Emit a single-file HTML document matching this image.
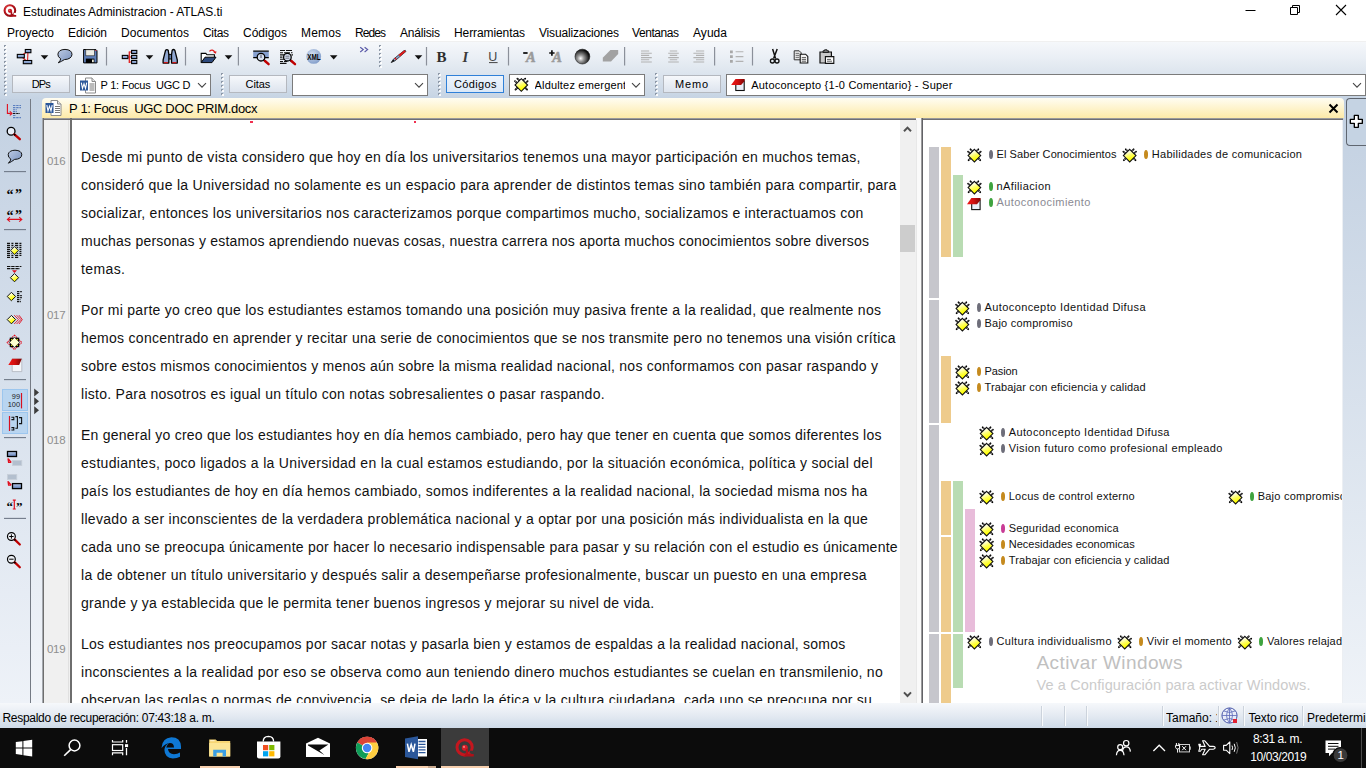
<!DOCTYPE html>
<html><head><meta charset="utf-8"><title>ATLAS.ti</title>
<style>
html,body{margin:0;padding:0;width:1366px;height:768px;overflow:hidden;background:#fff;font-family:'Liberation Sans', sans-serif;}
#root{position:relative;width:1366px;height:768px;overflow:hidden;}
#root div,#root svg{position:absolute;}
.t{position:absolute;white-space:pre;font-family:'Liberation Sans', sans-serif;}

</style></head><body><div id="root">
<div style="left:0px;top:0px;width:1366px;height:42px;background:#fff;"></div>
<div style="left:0px;top:41px;width:1366px;height:58px;background:linear-gradient(#f6f8fb 0%,#eaeff5 28%,#dde5ee 55%,#c5d3e3 100%);"></div>
<div style="left:0px;top:41px;width:1366px;height:1px;background:#f0f0f0;"></div>
<div style="left:0px;top:99px;width:30px;height:605px;background:linear-gradient(#c3d1e2,#eef2f8);"></div>
<div style="left:30px;top:99px;width:1px;height:605px;background:#747a84;"></div>
<div style="left:31px;top:99px;width:12px;height:605px;background:linear-gradient(#c6d4e4,#f1f4f9);"></div>
<div style="left:1343px;top:99px;width:23px;height:605px;background:linear-gradient(#c2d0e1,#eff3f8);"></div>
<div style="left:42px;top:98px;width:1302px;height:20px;background:linear-gradient(#fffdf2,#fdeaa8);border-radius:4px 4px 0 0;"></div>
<div style="left:43px;top:118px;width:1300px;height:1px;background:#9a9a9a;"></div>
<div style="left:43px;top:119px;width:1300px;height:1px;background:#6e6e74;"></div>
<div style="left:44px;top:120px;width:26px;height:584px;background:#f0f0f0;"></div>
<div style="left:68px;top:120px;width:1px;height:584px;background:#e0e0e0;"></div>
<div style="left:42px;top:118px;width:1px;height:586px;background:#a4a8ae;"></div>
<div style="left:43px;top:118px;width:1px;height:586px;background:#6e6e6e;"></div>
<div style="left:70px;top:118px;width:2px;height:586px;background:#6e6e6e;"></div>
<div style="left:72px;top:120px;width:828px;height:584px;background:#fff;"></div>
<div style="left:900px;top:120px;width:16px;height:584px;background:#f0f0f0;"></div>
<div style="left:900px;top:225px;width:15px;height:27px;background:#cdcdcd;"></div>
<div style="left:916px;top:118px;width:6px;height:586px;background:#fafafa;"></div>
<div style="left:916px;top:120px;width:1px;height:584px;background:#e8e8e8;"></div>
<div style="left:921px;top:118px;width:1px;height:586px;background:#9a9a9c;"></div>
<div style="left:922px;top:118px;width:1px;height:586px;background:#626266;"></div>
<div style="left:923px;top:120px;width:419px;height:584px;background:#fff;"></div>
<div style="left:1342px;top:120px;width:1px;height:584px;background:#eceff3;"></div>
<span class="t" style="left:23px;top:5.84px;font-size:12px;line-height:12px;color:#000;letter-spacing:-0.029px;">Estudinates Administracion - ATLAS.ti</span>
<span class="t" style="left:7px;top:26.84px;font-size:12px;line-height:12px;color:#000;letter-spacing:-0.051px;">Proyecto</span>
<span class="t" style="left:68px;top:26.84px;font-size:12px;line-height:12px;color:#000;letter-spacing:-0.060px;">Edición</span>
<span class="t" style="left:121px;top:26.84px;font-size:12px;line-height:12px;color:#000;letter-spacing:0.069px;">Documentos</span>
<span class="t" style="left:203px;top:26.84px;font-size:12px;line-height:12px;color:#000;letter-spacing:-0.336px;">Citas</span>
<span class="t" style="left:243px;top:26.84px;font-size:12px;line-height:12px;color:#000;letter-spacing:-0.005px;">Códigos</span>
<span class="t" style="left:301px;top:26.84px;font-size:12px;line-height:12px;color:#000;letter-spacing:0.164px;">Memos</span>
<span class="t" style="left:355px;top:26.84px;font-size:12px;line-height:12px;color:#000;letter-spacing:-0.922px;">Redes</span>
<span class="t" style="left:400px;top:26.84px;font-size:12px;line-height:12px;color:#000;letter-spacing:-0.194px;">Análisis</span>
<span class="t" style="left:454px;top:26.84px;font-size:12px;line-height:12px;color:#000;letter-spacing:-0.094px;">Herramientas</span>
<span class="t" style="left:539px;top:26.84px;font-size:12px;line-height:12px;color:#000;letter-spacing:-0.179px;">Visualizaciones</span>
<span class="t" style="left:632px;top:26.84px;font-size:12px;line-height:12px;color:#000;letter-spacing:-0.435px;">Ventanas</span>
<span class="t" style="left:693px;top:26.84px;font-size:12px;line-height:12px;color:#000;letter-spacing:0.047px;">Ayuda</span>
<span class="t" style="left:81px;top:149.75px;font-size:14px;line-height:14px;color:#111;letter-spacing:0.275px;">Desde mi punto de vista considero que hoy en día los universitarios tenemos una mayor participación en muchos temas,</span>
<span class="t" style="left:81px;top:177.75px;font-size:14px;line-height:14px;color:#111;letter-spacing:0.294px;">consideró que la Universidad no solamente es un espacio para aprender de distintos temas sino también para compartir, para</span>
<span class="t" style="left:81px;top:205.75px;font-size:14px;line-height:14px;color:#111;letter-spacing:0.271px;">socializar, entonces los universitarios nos caracterizamos porque compartimos mucho, socializamos e interactuamos con</span>
<span class="t" style="left:81px;top:233.75px;font-size:14px;line-height:14px;color:#111;letter-spacing:0.218px;">muchas personas y estamos aprendiendo nuevas cosas, nuestra carrera nos aporta muchos conocimientos sobre diversos</span>
<span class="t" style="left:81px;top:261.75px;font-size:14px;line-height:14px;color:#111;letter-spacing:0.397px;">temas.</span>
<span class="t" style="left:81px;top:302.75px;font-size:14px;line-height:14px;color:#111;letter-spacing:0.281px;">Por mi parte yo creo que los estudiantes estamos tomando una posición muy pasiva frente a la realidad, que realmente nos</span>
<span class="t" style="left:81px;top:330.75px;font-size:14px;line-height:14px;color:#111;letter-spacing:0.275px;">hemos concentrado en aprender y recitar una serie de conocimientos que se nos transmite pero no tenemos una visión crítica</span>
<span class="t" style="left:81px;top:358.75px;font-size:14px;line-height:14px;color:#111;letter-spacing:0.254px;">sobre estos mismos conocimientos y menos aún sobre la misma realidad nacional, nos conformamos con pasar raspando y</span>
<span class="t" style="left:81px;top:386.75px;font-size:14px;line-height:14px;color:#111;letter-spacing:0.277px;">listo. Para nosotros es igual un título con notas sobresalientes o pasar raspando.</span>
<span class="t" style="left:81px;top:427.75px;font-size:14px;line-height:14px;color:#111;letter-spacing:0.241px;">En general yo creo que los estudiantes hoy en día hemos cambiado, pero hay que tener en cuenta que somos diferentes los</span>
<span class="t" style="left:81px;top:455.75px;font-size:14px;line-height:14px;color:#111;letter-spacing:0.307px;">estudiantes, poco ligados a la Universidad en la cual estamos estudiando, por la situación económica, política y social del</span>
<span class="t" style="left:81px;top:483.75px;font-size:14px;line-height:14px;color:#111;letter-spacing:0.276px;">país los estudiantes de hoy en día hemos cambiado, somos indiferentes a la realidad nacional, la sociedad misma nos ha</span>
<span class="t" style="left:81px;top:511.75px;font-size:14px;line-height:14px;color:#111;letter-spacing:0.305px;">llevado a ser inconscientes de la verdadera problemática nacional y a optar por una posición más individualista en la que</span>
<span class="t" style="left:81px;top:539.75px;font-size:14px;line-height:14px;color:#111;letter-spacing:0.259px;">cada uno se preocupa únicamente por hacer lo necesario indispensable para pasar y su relación con el estudio es únicamente</span>
<span class="t" style="left:81px;top:567.75px;font-size:14px;line-height:14px;color:#111;letter-spacing:0.288px;">la de obtener un título universitario y después salir a desempeñarse profesionalmente, buscar un puesto en una empresa</span>
<span class="t" style="left:81px;top:595.75px;font-size:14px;line-height:14px;color:#111;letter-spacing:0.274px;">grande y ya establecida que le permita tener buenos ingresos y mejorar su nivel de vida.</span>
<span class="t" style="left:81px;top:636.75px;font-size:14px;line-height:14px;color:#111;letter-spacing:0.241px;">Los estudiantes nos preocupamos por sacar notas y pasarla bien y estamos de espaldas a la realidad nacional, somos</span>
<span class="t" style="left:81px;top:664.75px;font-size:14px;line-height:14px;color:#111;letter-spacing:0.282px;">inconscientes a la realidad por eso se observa como aun teniendo dinero muchos estudiantes se cuelan en transmilenio, no</span>
<span class="t" style="left:81px;top:692.75px;font-size:14px;line-height:14px;color:#111;letter-spacing:0.254px;">observan las reglas o normas de convivencia, se deja de lado la ética y la cultura ciudadana, cada uno se preocupa por su</span>
<div style="left:923px;top:119px;width:419px;height:584px;overflow:hidden">
<div style="left:6px;top:28px;width:10px;height:151px;background:#c6c6cc;"></div>
<div style="left:6px;top:181px;width:10px;height:123px;background:#c6c6cc;"></div>
<div style="left:6px;top:306px;width:10px;height:207px;background:#c6c6cc;"></div>
<div style="left:6px;top:515px;width:10px;height:70px;background:#c6c6cc;"></div>
<div style="left:18px;top:28px;width:10px;height:110px;background:#eecb8c;"></div>
<div style="left:18px;top:237px;width:10px;height:67px;background:#eecb8c;"></div>
<div style="left:18px;top:362px;width:10px;height:54px;background:#eecb8c;"></div>
<div style="left:18px;top:418px;width:10px;height:95px;background:#eecb8c;"></div>
<div style="left:18px;top:515px;width:10px;height:70px;background:#eecb8c;"></div>
<div style="left:30px;top:56px;width:10px;height:82px;background:#b9dcb3;"></div>
<div style="left:30px;top:362px;width:10px;height:151px;background:#b9dcb3;"></div>
<div style="left:30px;top:515px;width:10px;height:54px;background:#b9dcb3;"></div>
<div style="left:42px;top:390px;width:10px;height:123px;background:#e8bcda;"></div>
<svg width="0" height="0" style="left:0;top:0"><defs><linearGradient id="dg" x1="0.3" y1="0" x2="0.7" y2="1"><stop offset="0.15" stop-color="#ffffff"/><stop offset="0.5" stop-color="#ffff60"/><stop offset="0.8" stop-color="#ffff00"/></linearGradient><linearGradient id="rg" x1="0" y1="0" x2="1" y2="0"><stop offset="0" stop-color="#f01818"/><stop offset="0.5" stop-color="#d01010"/><stop offset="1" stop-color="#7a0606"/></linearGradient></defs></svg>
<svg style="left:43px;top:28px" width="17" height="17" viewBox="-0.4 -0.6 17 17"><path d="M3.9 6.1L1.7 4.1M6.3 3.7L4.1 1.7M12.1 6.1L14.3 4.1M9.7 3.7L11.9 1.7M4.3 10.5L2.2 12.6M11.7 10.5L13.8 12.6" stroke="#000" stroke-width="1.8" stroke-linecap="round"/><path d="M3.9 6.1L1.7 4.1M6.3 3.7L4.1 1.7M12.1 6.1L14.3 4.1M9.7 3.7L11.9 1.7M4.3 10.5L2.2 12.6M11.7 10.5L13.8 12.6" stroke="#fff" stroke-width="0.9" stroke-dasharray="0.9 0.8" stroke-dashoffset="0.2"/><path d="M8 1.7 L14.3 8 L8 14.3 L1.7 8 Z" fill="url(#dg)" stroke="#111" stroke-width="1.1"/></svg>
<div style="left:65.5px;top:30.5px;width:4px;height:9px;border-radius:2px/4.5px;background:#6e6e7a"></div>
<span class="t" style="left:73.5px;top:29.69px;font-size:11px;line-height:11px;color:#111;letter-spacing:0.094px;">El Saber Conocimientos</span>
<svg style="left:198px;top:28px" width="17" height="17" viewBox="-0.7 -0.6 17 17"><path d="M3.9 6.1L1.7 4.1M6.3 3.7L4.1 1.7M12.1 6.1L14.3 4.1M9.7 3.7L11.9 1.7M4.3 10.5L2.2 12.6M11.7 10.5L13.8 12.6" stroke="#000" stroke-width="1.8" stroke-linecap="round"/><path d="M3.9 6.1L1.7 4.1M6.3 3.7L4.1 1.7M12.1 6.1L14.3 4.1M9.7 3.7L11.9 1.7M4.3 10.5L2.2 12.6M11.7 10.5L13.8 12.6" stroke="#fff" stroke-width="0.9" stroke-dasharray="0.9 0.8" stroke-dashoffset="0.2"/><path d="M8 1.7 L14.3 8 L8 14.3 L1.7 8 Z" fill="url(#dg)" stroke="#111" stroke-width="1.1"/></svg>
<div style="left:220.79999999999995px;top:30.5px;width:4px;height:9px;border-radius:2px/4.5px;background:#c58a1e"></div>
<span class="t" style="left:228.79999999999995px;top:29.69px;font-size:11px;line-height:11px;color:#111;letter-spacing:0.273px;">Habilidades de comunicacion</span>
<svg style="left:43px;top:60px" width="17" height="17" viewBox="-0.4 -0.6 17 17"><path d="M3.9 6.1L1.7 4.1M6.3 3.7L4.1 1.7M12.1 6.1L14.3 4.1M9.7 3.7L11.9 1.7M4.3 10.5L2.2 12.6M11.7 10.5L13.8 12.6" stroke="#000" stroke-width="1.8" stroke-linecap="round"/><path d="M3.9 6.1L1.7 4.1M6.3 3.7L4.1 1.7M12.1 6.1L14.3 4.1M9.7 3.7L11.9 1.7M4.3 10.5L2.2 12.6M11.7 10.5L13.8 12.6" stroke="#fff" stroke-width="0.9" stroke-dasharray="0.9 0.8" stroke-dashoffset="0.2"/><path d="M8 1.7 L14.3 8 L8 14.3 L1.7 8 Z" fill="url(#dg)" stroke="#111" stroke-width="1.1"/></svg>
<div style="left:65.5px;top:62.5px;width:4px;height:9px;border-radius:2px/4.5px;background:#3fa33f"></div>
<span class="t" style="left:73.5px;top:61.69px;font-size:11px;line-height:11px;color:#111;letter-spacing:0.386px;">nAfiliacion</span>
<svg style="left:43px;top:76px" width="17" height="17" viewBox="-0.4 -0.6 17 17"><rect x="5.3" y="4.6" width="8.4" height="9.4" fill="#e9eef8" stroke="#111" stroke-width="1.1"/><path d="M0.6 8.6 L5 2.4 L14.2 2.4 L14.2 4.4 L10.6 8.6 Z" fill="url(#rg)"/></svg>
<div style="left:65.5px;top:78.5px;width:4px;height:9px;border-radius:2px/4.5px;background:#3fa33f"></div>
<span class="t" style="left:73.5px;top:77.69px;font-size:11px;line-height:11px;color:#8a8a93;letter-spacing:0.436px;">Autoconocimiento</span>
<svg style="left:31px;top:181px" width="17" height="17" viewBox="-0.4 -0.6 17 17"><path d="M3.9 6.1L1.7 4.1M6.3 3.7L4.1 1.7M12.1 6.1L14.3 4.1M9.7 3.7L11.9 1.7M4.3 10.5L2.2 12.6M11.7 10.5L13.8 12.6" stroke="#000" stroke-width="1.8" stroke-linecap="round"/><path d="M3.9 6.1L1.7 4.1M6.3 3.7L4.1 1.7M12.1 6.1L14.3 4.1M9.7 3.7L11.9 1.7M4.3 10.5L2.2 12.6M11.7 10.5L13.8 12.6" stroke="#fff" stroke-width="0.9" stroke-dasharray="0.9 0.8" stroke-dashoffset="0.2"/><path d="M8 1.7 L14.3 8 L8 14.3 L1.7 8 Z" fill="url(#dg)" stroke="#111" stroke-width="1.1"/></svg>
<div style="left:53.5px;top:183.5px;width:4px;height:9px;border-radius:2px/4.5px;background:#6e6e7a"></div>
<span class="t" style="left:61.5px;top:182.69px;font-size:11px;line-height:11px;color:#111;letter-spacing:0.403px;">Autoconcepto Identidad Difusa</span>
<svg style="left:31px;top:197px" width="17" height="17" viewBox="-0.4 -0.6 17 17"><path d="M3.9 6.1L1.7 4.1M6.3 3.7L4.1 1.7M12.1 6.1L14.3 4.1M9.7 3.7L11.9 1.7M4.3 10.5L2.2 12.6M11.7 10.5L13.8 12.6" stroke="#000" stroke-width="1.8" stroke-linecap="round"/><path d="M3.9 6.1L1.7 4.1M6.3 3.7L4.1 1.7M12.1 6.1L14.3 4.1M9.7 3.7L11.9 1.7M4.3 10.5L2.2 12.6M11.7 10.5L13.8 12.6" stroke="#fff" stroke-width="0.9" stroke-dasharray="0.9 0.8" stroke-dashoffset="0.2"/><path d="M8 1.7 L14.3 8 L8 14.3 L1.7 8 Z" fill="url(#dg)" stroke="#111" stroke-width="1.1"/></svg>
<div style="left:53.5px;top:199.5px;width:4px;height:9px;border-radius:2px/4.5px;background:#6e6e7a"></div>
<span class="t" style="left:61.5px;top:198.69px;font-size:11px;line-height:11px;color:#111;letter-spacing:0.223px;">Bajo compromiso</span>
<svg style="left:31px;top:245px" width="17" height="17" viewBox="-0.4 -0.6 17 17"><path d="M3.9 6.1L1.7 4.1M6.3 3.7L4.1 1.7M12.1 6.1L14.3 4.1M9.7 3.7L11.9 1.7M4.3 10.5L2.2 12.6M11.7 10.5L13.8 12.6" stroke="#000" stroke-width="1.8" stroke-linecap="round"/><path d="M3.9 6.1L1.7 4.1M6.3 3.7L4.1 1.7M12.1 6.1L14.3 4.1M9.7 3.7L11.9 1.7M4.3 10.5L2.2 12.6M11.7 10.5L13.8 12.6" stroke="#fff" stroke-width="0.9" stroke-dasharray="0.9 0.8" stroke-dashoffset="0.2"/><path d="M8 1.7 L14.3 8 L8 14.3 L1.7 8 Z" fill="url(#dg)" stroke="#111" stroke-width="1.1"/></svg>
<div style="left:53.5px;top:247.5px;width:4px;height:9px;border-radius:2px/4.5px;background:#c58a1e"></div>
<span class="t" style="left:61.5px;top:246.69px;font-size:11px;line-height:11px;color:#111;letter-spacing:-0.088px;">Pasion</span>
<svg style="left:31px;top:261px" width="17" height="17" viewBox="-0.4 -0.6 17 17"><path d="M3.9 6.1L1.7 4.1M6.3 3.7L4.1 1.7M12.1 6.1L14.3 4.1M9.7 3.7L11.9 1.7M4.3 10.5L2.2 12.6M11.7 10.5L13.8 12.6" stroke="#000" stroke-width="1.8" stroke-linecap="round"/><path d="M3.9 6.1L1.7 4.1M6.3 3.7L4.1 1.7M12.1 6.1L14.3 4.1M9.7 3.7L11.9 1.7M4.3 10.5L2.2 12.6M11.7 10.5L13.8 12.6" stroke="#fff" stroke-width="0.9" stroke-dasharray="0.9 0.8" stroke-dashoffset="0.2"/><path d="M8 1.7 L14.3 8 L8 14.3 L1.7 8 Z" fill="url(#dg)" stroke="#111" stroke-width="1.1"/></svg>
<div style="left:53.5px;top:263.5px;width:4px;height:9px;border-radius:2px/4.5px;background:#c58a1e"></div>
<span class="t" style="left:61.5px;top:262.69px;font-size:11px;line-height:11px;color:#111;letter-spacing:0.136px;">Trabajar con eficiencia y calidad</span>
<svg style="left:55px;top:306px" width="17" height="17" viewBox="-0.6 -0.6 17 17"><path d="M3.9 6.1L1.7 4.1M6.3 3.7L4.1 1.7M12.1 6.1L14.3 4.1M9.7 3.7L11.9 1.7M4.3 10.5L2.2 12.6M11.7 10.5L13.8 12.6" stroke="#000" stroke-width="1.8" stroke-linecap="round"/><path d="M3.9 6.1L1.7 4.1M6.3 3.7L4.1 1.7M12.1 6.1L14.3 4.1M9.7 3.7L11.9 1.7M4.3 10.5L2.2 12.6M11.7 10.5L13.8 12.6" stroke="#fff" stroke-width="0.9" stroke-dasharray="0.9 0.8" stroke-dashoffset="0.2"/><path d="M8 1.7 L14.3 8 L8 14.3 L1.7 8 Z" fill="url(#dg)" stroke="#111" stroke-width="1.1"/></svg>
<div style="left:77.70000000000005px;top:308.5px;width:4px;height:9px;border-radius:2px/4.5px;background:#6e6e7a"></div>
<span class="t" style="left:85.70000000000005px;top:307.69px;font-size:11px;line-height:11px;color:#111;letter-spacing:0.392px;">Autoconcepto Identidad Difusa</span>
<svg style="left:55px;top:322px" width="17" height="17" viewBox="-0.6 -0.6 17 17"><path d="M3.9 6.1L1.7 4.1M6.3 3.7L4.1 1.7M12.1 6.1L14.3 4.1M9.7 3.7L11.9 1.7M4.3 10.5L2.2 12.6M11.7 10.5L13.8 12.6" stroke="#000" stroke-width="1.8" stroke-linecap="round"/><path d="M3.9 6.1L1.7 4.1M6.3 3.7L4.1 1.7M12.1 6.1L14.3 4.1M9.7 3.7L11.9 1.7M4.3 10.5L2.2 12.6M11.7 10.5L13.8 12.6" stroke="#fff" stroke-width="0.9" stroke-dasharray="0.9 0.8" stroke-dashoffset="0.2"/><path d="M8 1.7 L14.3 8 L8 14.3 L1.7 8 Z" fill="url(#dg)" stroke="#111" stroke-width="1.1"/></svg>
<div style="left:77.70000000000005px;top:324.5px;width:4px;height:9px;border-radius:2px/4.5px;background:#6e6e7a"></div>
<span class="t" style="left:85.70000000000005px;top:323.69px;font-size:11px;line-height:11px;color:#111;letter-spacing:0.383px;">Vision futuro como profesional empleado</span>
<svg style="left:55px;top:370px" width="17" height="17" viewBox="-0.6 -0.6 17 17"><path d="M3.9 6.1L1.7 4.1M6.3 3.7L4.1 1.7M12.1 6.1L14.3 4.1M9.7 3.7L11.9 1.7M4.3 10.5L2.2 12.6M11.7 10.5L13.8 12.6" stroke="#000" stroke-width="1.8" stroke-linecap="round"/><path d="M3.9 6.1L1.7 4.1M6.3 3.7L4.1 1.7M12.1 6.1L14.3 4.1M9.7 3.7L11.9 1.7M4.3 10.5L2.2 12.6M11.7 10.5L13.8 12.6" stroke="#fff" stroke-width="0.9" stroke-dasharray="0.9 0.8" stroke-dashoffset="0.2"/><path d="M8 1.7 L14.3 8 L8 14.3 L1.7 8 Z" fill="url(#dg)" stroke="#111" stroke-width="1.1"/></svg>
<div style="left:77.70000000000005px;top:372.5px;width:4px;height:9px;border-radius:2px/4.5px;background:#c58a1e"></div>
<span class="t" style="left:85.70000000000005px;top:371.69px;font-size:11px;line-height:11px;color:#111;letter-spacing:0.240px;">Locus de control externo</span>
<svg style="left:304px;top:370px" width="17" height="17" viewBox="-0.6 -0.6 17 17"><path d="M3.9 6.1L1.7 4.1M6.3 3.7L4.1 1.7M12.1 6.1L14.3 4.1M9.7 3.7L11.9 1.7M4.3 10.5L2.2 12.6M11.7 10.5L13.8 12.6" stroke="#000" stroke-width="1.8" stroke-linecap="round"/><path d="M3.9 6.1L1.7 4.1M6.3 3.7L4.1 1.7M12.1 6.1L14.3 4.1M9.7 3.7L11.9 1.7M4.3 10.5L2.2 12.6M11.7 10.5L13.8 12.6" stroke="#fff" stroke-width="0.9" stroke-dasharray="0.9 0.8" stroke-dashoffset="0.2"/><path d="M8 1.7 L14.3 8 L8 14.3 L1.7 8 Z" fill="url(#dg)" stroke="#111" stroke-width="1.1"/></svg>
<div style="left:326.70000000000005px;top:372.5px;width:4px;height:9px;border-radius:2px/4.5px;background:#3fa33f"></div>
<span class="t" style="left:334.70000000000005px;top:371.69px;font-size:11px;line-height:11px;color:#111;letter-spacing:0.230px;">Bajo compromiso</span>
<svg style="left:55px;top:402px" width="17" height="17" viewBox="-0.6 -0.6 17 17"><path d="M3.9 6.1L1.7 4.1M6.3 3.7L4.1 1.7M12.1 6.1L14.3 4.1M9.7 3.7L11.9 1.7M4.3 10.5L2.2 12.6M11.7 10.5L13.8 12.6" stroke="#000" stroke-width="1.8" stroke-linecap="round"/><path d="M3.9 6.1L1.7 4.1M6.3 3.7L4.1 1.7M12.1 6.1L14.3 4.1M9.7 3.7L11.9 1.7M4.3 10.5L2.2 12.6M11.7 10.5L13.8 12.6" stroke="#fff" stroke-width="0.9" stroke-dasharray="0.9 0.8" stroke-dashoffset="0.2"/><path d="M8 1.7 L14.3 8 L8 14.3 L1.7 8 Z" fill="url(#dg)" stroke="#111" stroke-width="1.1"/></svg>
<div style="left:77.70000000000005px;top:404.5px;width:4px;height:9px;border-radius:2px/4.5px;background:#c83c96"></div>
<span class="t" style="left:85.70000000000005px;top:403.69px;font-size:11px;line-height:11px;color:#111;letter-spacing:0.200px;">Seguridad economica</span>
<svg style="left:55px;top:418px" width="17" height="17" viewBox="-0.6 -0.6 17 17"><path d="M3.9 6.1L1.7 4.1M6.3 3.7L4.1 1.7M12.1 6.1L14.3 4.1M9.7 3.7L11.9 1.7M4.3 10.5L2.2 12.6M11.7 10.5L13.8 12.6" stroke="#000" stroke-width="1.8" stroke-linecap="round"/><path d="M3.9 6.1L1.7 4.1M6.3 3.7L4.1 1.7M12.1 6.1L14.3 4.1M9.7 3.7L11.9 1.7M4.3 10.5L2.2 12.6M11.7 10.5L13.8 12.6" stroke="#fff" stroke-width="0.9" stroke-dasharray="0.9 0.8" stroke-dashoffset="0.2"/><path d="M8 1.7 L14.3 8 L8 14.3 L1.7 8 Z" fill="url(#dg)" stroke="#111" stroke-width="1.1"/></svg>
<div style="left:77.70000000000005px;top:420.5px;width:4px;height:9px;border-radius:2px/4.5px;background:#c58a1e"></div>
<span class="t" style="left:85.70000000000005px;top:419.69px;font-size:11px;line-height:11px;color:#111;letter-spacing:0.031px;">Necesidades economicas</span>
<svg style="left:55px;top:434px" width="17" height="17" viewBox="-0.6 -0.6 17 17"><path d="M3.9 6.1L1.7 4.1M6.3 3.7L4.1 1.7M12.1 6.1L14.3 4.1M9.7 3.7L11.9 1.7M4.3 10.5L2.2 12.6M11.7 10.5L13.8 12.6" stroke="#000" stroke-width="1.8" stroke-linecap="round"/><path d="M3.9 6.1L1.7 4.1M6.3 3.7L4.1 1.7M12.1 6.1L14.3 4.1M9.7 3.7L11.9 1.7M4.3 10.5L2.2 12.6M11.7 10.5L13.8 12.6" stroke="#fff" stroke-width="0.9" stroke-dasharray="0.9 0.8" stroke-dashoffset="0.2"/><path d="M8 1.7 L14.3 8 L8 14.3 L1.7 8 Z" fill="url(#dg)" stroke="#111" stroke-width="1.1"/></svg>
<div style="left:77.70000000000005px;top:436.5px;width:4px;height:9px;border-radius:2px/4.5px;background:#c58a1e"></div>
<span class="t" style="left:85.70000000000005px;top:435.69px;font-size:11px;line-height:11px;color:#111;letter-spacing:0.127px;">Trabajar con eficiencia y calidad</span>
<svg style="left:43px;top:515px" width="17" height="17" viewBox="-0.4 -0.6 17 17"><path d="M3.9 6.1L1.7 4.1M6.3 3.7L4.1 1.7M12.1 6.1L14.3 4.1M9.7 3.7L11.9 1.7M4.3 10.5L2.2 12.6M11.7 10.5L13.8 12.6" stroke="#000" stroke-width="1.8" stroke-linecap="round"/><path d="M3.9 6.1L1.7 4.1M6.3 3.7L4.1 1.7M12.1 6.1L14.3 4.1M9.7 3.7L11.9 1.7M4.3 10.5L2.2 12.6M11.7 10.5L13.8 12.6" stroke="#fff" stroke-width="0.9" stroke-dasharray="0.9 0.8" stroke-dashoffset="0.2"/><path d="M8 1.7 L14.3 8 L8 14.3 L1.7 8 Z" fill="url(#dg)" stroke="#111" stroke-width="1.1"/></svg>
<div style="left:65.5px;top:517.5px;width:4px;height:9px;border-radius:2px/4.5px;background:#6e6e7a"></div>
<span class="t" style="left:73.5px;top:516.69px;font-size:11px;line-height:11px;color:#111;letter-spacing:0.352px;">Cultura individualismo</span>
<svg style="left:193px;top:515px" width="17" height="17" viewBox="-0.7 -0.6 17 17"><path d="M3.9 6.1L1.7 4.1M6.3 3.7L4.1 1.7M12.1 6.1L14.3 4.1M9.7 3.7L11.9 1.7M4.3 10.5L2.2 12.6M11.7 10.5L13.8 12.6" stroke="#000" stroke-width="1.8" stroke-linecap="round"/><path d="M3.9 6.1L1.7 4.1M6.3 3.7L4.1 1.7M12.1 6.1L14.3 4.1M9.7 3.7L11.9 1.7M4.3 10.5L2.2 12.6M11.7 10.5L13.8 12.6" stroke="#fff" stroke-width="0.9" stroke-dasharray="0.9 0.8" stroke-dashoffset="0.2"/><path d="M8 1.7 L14.3 8 L8 14.3 L1.7 8 Z" fill="url(#dg)" stroke="#111" stroke-width="1.1"/></svg>
<div style="left:215.79999999999995px;top:517.5px;width:4px;height:9px;border-radius:2px/4.5px;background:#c58a1e"></div>
<span class="t" style="left:223.79999999999995px;top:516.69px;font-size:11px;line-height:11px;color:#111;letter-spacing:0.205px;">Vivir el momento</span>
<svg style="left:313px;top:515px" width="17" height="17" viewBox="-0.9 -0.6 17 17"><path d="M3.9 6.1L1.7 4.1M6.3 3.7L4.1 1.7M12.1 6.1L14.3 4.1M9.7 3.7L11.9 1.7M4.3 10.5L2.2 12.6M11.7 10.5L13.8 12.6" stroke="#000" stroke-width="1.8" stroke-linecap="round"/><path d="M3.9 6.1L1.7 4.1M6.3 3.7L4.1 1.7M12.1 6.1L14.3 4.1M9.7 3.7L11.9 1.7M4.3 10.5L2.2 12.6M11.7 10.5L13.8 12.6" stroke="#fff" stroke-width="0.9" stroke-dasharray="0.9 0.8" stroke-dashoffset="0.2"/><path d="M8 1.7 L14.3 8 L8 14.3 L1.7 8 Z" fill="url(#dg)" stroke="#111" stroke-width="1.1"/></svg>
<div style="left:336px;top:517.5px;width:4px;height:9px;border-radius:2px/4.5px;background:#3fa33f"></div>
<span class="t" style="left:344px;top:516.69px;font-size:11px;line-height:11px;color:#111;letter-spacing:0.176px;">Valores relajados</span>
<span class="t" style="left:113.5px;top:533.92px;font-size:19px;line-height:19px;color:#c0c0c0;letter-spacing:0.398px;">Activar Windows</span>
<span class="t" style="left:113.5px;top:558.73px;font-size:14.5px;line-height:14.5px;color:#cbcbcb;letter-spacing:0.123px;">Ve a Configuración para activar Windows.</span>
</div>
<div style="left:0px;top:703px;width:1366px;height:25px;background:linear-gradient(#f6f8fb,#e4eaf2 50%,#cfdbe8);"></div>
<span class="t" style="left:2.4px;top:712.34px;font-size:12px;line-height:12px;color:#000;letter-spacing:-0.284px;">Respaldo de recuperación: 07:43:18 a. m.</span>
<div style="left:1041px;top:706px;width:1px;height:20px;background:#ccd3dc;"></div>
<div style="left:1042px;top:706px;width:1px;height:20px;background:#f8fafc;"></div>
<div style="left:1064px;top:706px;width:1px;height:20px;background:#ccd3dc;"></div>
<div style="left:1065px;top:706px;width:1px;height:20px;background:#f8fafc;"></div>
<div style="left:1086px;top:706px;width:1px;height:20px;background:#ccd3dc;"></div>
<div style="left:1087px;top:706px;width:1px;height:20px;background:#f8fafc;"></div>
<div style="left:1162px;top:706px;width:1px;height:20px;background:#ccd3dc;"></div>
<div style="left:1163px;top:706px;width:1px;height:20px;background:#f8fafc;"></div>
<div style="left:1218px;top:706px;width:1px;height:20px;background:#ccd3dc;"></div>
<div style="left:1219px;top:706px;width:1px;height:20px;background:#f8fafc;"></div>
<div style="left:1243px;top:706px;width:1px;height:20px;background:#ccd3dc;"></div>
<div style="left:1244px;top:706px;width:1px;height:20px;background:#f8fafc;"></div>
<div style="left:1302px;top:706px;width:1px;height:20px;background:#ccd3dc;"></div>
<div style="left:1303px;top:706px;width:1px;height:20px;background:#f8fafc;"></div>
<span class="t" style="left:1166px;top:712.34px;font-size:12px;line-height:12px;color:#000;width:51px;overflow:hidden;">Tamaño: 1</span>
<span class="t" style="left:1248.5px;top:712.34px;font-size:12px;line-height:12px;color:#000;letter-spacing:-0.151px;">Texto rico</span>
<span class="t" style="left:1307px;top:712.34px;font-size:12px;line-height:12px;color:#000;width:59px;overflow:hidden;">Predeterminado</span>
<div style="left:0px;top:728px;width:1366px;height:40px;background:#0c0c0c;"></div>
<div style="left:4px;top:45px;width:2px;height:52px;background:repeating-linear-gradient(#8e99a8 0 2px,transparent 2px 4px)"></div>
<div style="left:5px;top:46px;width:2px;height:52px;background:repeating-linear-gradient(#fff 0 2px,transparent 2px 4px);opacity:.9"></div>
<div style="left:221px;top:73px;width:2px;height:24px;background:repeating-linear-gradient(#8e99a8 0 2px,transparent 2px 4px)"></div>
<div style="left:222px;top:74px;width:2px;height:24px;background:repeating-linear-gradient(#fff 0 2px,transparent 2px 4px);opacity:.9"></div>
<div style="left:438px;top:73px;width:2px;height:24px;background:repeating-linear-gradient(#8e99a8 0 2px,transparent 2px 4px)"></div>
<div style="left:439px;top:74px;width:2px;height:24px;background:repeating-linear-gradient(#fff 0 2px,transparent 2px 4px);opacity:.9"></div>
<div style="left:655px;top:73px;width:2px;height:24px;background:repeating-linear-gradient(#8e99a8 0 2px,transparent 2px 4px)"></div>
<div style="left:656px;top:74px;width:2px;height:24px;background:repeating-linear-gradient(#fff 0 2px,transparent 2px 4px);opacity:.9"></div>
<div style="left:379px;top:45px;width:2px;height:24px;background:repeating-linear-gradient(#8e99a8 0 2px,transparent 2px 4px)"></div>
<div style="left:380px;top:46px;width:2px;height:24px;background:repeating-linear-gradient(#fff 0 2px,transparent 2px 4px);opacity:.9"></div>
<div style="left:12px;top:75px;width:56px;height:16px;border:1px solid #b4b8bf;background:linear-gradient(#f6f8fb,#dde4ee)"></div>
<span class="t" style="left:31.8px;top:79.09px;font-size:11px;line-height:11px;color:#000;letter-spacing:-0.891px;">DPs</span>
<div style="left:229px;top:75px;width:56px;height:16px;border:1px solid #b4b8bf;background:linear-gradient(#f6f8fb,#dde4ee)"></div>
<span class="t" style="left:245.6px;top:79.09px;font-size:11px;line-height:11px;color:#000;letter-spacing:-0.116px;">Citas</span>
<div style="left:446px;top:75px;width:56px;height:16px;border:1px solid #2f80d8;background:linear-gradient(#edf4fc,#dbe8f7)"></div>
<span class="t" style="left:454px;top:79.09px;font-size:11px;line-height:11px;color:#000;letter-spacing:0.357px;">Códigos</span>
<div style="left:663px;top:75px;width:56px;height:16px;border:1px solid #b4b8bf;background:linear-gradient(#f6f8fb,#dde4ee)"></div>
<span class="t" style="left:675px;top:79.09px;font-size:11px;line-height:11px;color:#000;letter-spacing:0.812px;">Memo</span>
<div style="left:75px;top:74px;width:134px;height:20px;border:1px solid #7b7b7b;background:#fff"></div>
<svg style="left:197px;top:82px" width="10" height="7" viewBox="0 0 10 7"><path d="M1 1.2 L5 5.2 L9 1.2" fill="none" stroke="#444" stroke-width="1.1"/></svg>
<div style="left:292px;top:74px;width:134px;height:20px;border:1px solid #7b7b7b;background:#fff"></div>
<svg style="left:414px;top:82px" width="10" height="7" viewBox="0 0 10 7"><path d="M1 1.2 L5 5.2 L9 1.2" fill="none" stroke="#444" stroke-width="1.1"/></svg>
<div style="left:509px;top:74px;width:134px;height:20px;border:1px solid #7b7b7b;background:#fff"></div>
<svg style="left:631px;top:82px" width="10" height="7" viewBox="0 0 10 7"><path d="M1 1.2 L5 5.2 L9 1.2" fill="none" stroke="#444" stroke-width="1.1"/></svg>
<div style="left:726px;top:74px;width:638px;height:20px;border:1px solid #7b7b7b;background:#fff"></div>
<svg style="left:1352px;top:82px" width="10" height="7" viewBox="0 0 10 7"><path d="M1 1.2 L5 5.2 L9 1.2" fill="none" stroke="#444" stroke-width="1.1"/></svg>
<svg style="left:80px;top:77px" width="17" height="17" viewBox="0 -0.5 17 17"><path d="M5.5 0.5h6.5l3.5 3.5v11.5h-10z" fill="#fff" stroke="#8a8a8a" stroke-width="1"/><path d="M12 0.5v3.5h3.5" fill="#e8e8e8" stroke="#8a8a8a" stroke-width="1"/><path d="M9.5 6.5h5M9.5 8.5h5M9.5 10.500h5M9.500 12.500h5" stroke="#777" stroke-width="1"/><rect x="0" y="3" width="8" height="10" fill="#2b579a"/><path d="M1.300 5.200l1.200 5.600 1.500-4.600 1.500 4.600 1.200-5.600" fill="none" stroke="#fff" stroke-width="1.100"/></svg>
<span class="t" style="left:100.5px;top:80.29px;font-size:11px;line-height:11px;color:#000;letter-spacing:-0.246px;">P 1: Focus  UGC D</span>
<svg style="left:513px;top:77px" width="17" height="17" viewBox="-0.3 0 17 17"><path d="M3.9 6.1L1.7 4.1M6.3 3.7L4.1 1.7M12.1 6.1L14.3 4.1M9.7 3.7L11.9 1.7M4.3 10.5L2.2 12.6M11.7 10.5L13.8 12.6" stroke="#000" stroke-width="1.8" stroke-linecap="round"/><path d="M3.9 6.1L1.7 4.1M6.3 3.7L4.1 1.7M12.1 6.1L14.3 4.1M9.7 3.7L11.9 1.7M4.3 10.5L2.2 12.6M11.7 10.5L13.8 12.6" stroke="#fff" stroke-width="0.9" stroke-dasharray="0.9 0.8" stroke-dashoffset="0.2"/><path d="M8 1.7 L14.3 8 L8 14.3 L1.7 8 Z" fill="url(#dg)" stroke="#111" stroke-width="1.1"/></svg>
<span class="t" style="left:534.5px;top:80.29px;font-size:11px;line-height:11px;color:#000;letter-spacing:0.183px;width:90.4px;overflow:hidden;">Aldultez emergent</span>
<svg style="left:730px;top:76px" width="17" height="17" viewBox="-0.5 -0.5 17 17"><rect x="5.3" y="4.6" width="8.4" height="9.4" fill="#e9eef8" stroke="#111" stroke-width="1.1"/><path d="M0.6 8.6 L5 2.4 L14.2 2.4 L14.2 4.4 L10.6 8.6 Z" fill="url(#rg)"/></svg>
<span class="t" style="left:751.2px;top:80.29px;font-size:11px;line-height:11px;color:#000;letter-spacing:0.238px;">Autoconcepto {1-0 Comentario} - Super</span>
<svg style="left:45px;top:100px" width="17" height="17" viewBox="-0.5 0 17 17"><path d="M5.5 0.5h6.5l3.5 3.5v11.5h-10z" fill="#fff" stroke="#8a8a8a" stroke-width="1"/><path d="M12 0.5v3.5h3.5" fill="#e8e8e8" stroke="#8a8a8a" stroke-width="1"/><path d="M9.5 6.5h5M9.5 8.5h5M9.5 10.500h5M9.500 12.500h5" stroke="#777" stroke-width="1"/><rect x="0" y="3" width="8" height="10" fill="#2b579a"/><path d="M1.300 5.200l1.200 5.600 1.500-4.600 1.500 4.600 1.200-5.600" fill="none" stroke="#fff" stroke-width="1.100"/></svg>
<span class="t" style="left:69px;top:102.00px;font-size:13px;line-height:13px;color:#000;letter-spacing:-0.329px;">P 1: Focus  UGC DOC PRIM.docx</span>
<svg style="left:1328px;top:103px" width="11" height="11" viewBox="0 0 11 11"><path d="M1.5 1.5l8 8M9.5 1.5l-8 8" stroke="#000" stroke-width="2"/></svg>
<span class="t" style="left:47px;top:156.27px;font-size:11.5px;line-height:11.5px;color:#8e8e8e;letter-spacing:-0.294px;">016</span>
<span class="t" style="left:47px;top:310.27px;font-size:11.5px;line-height:11.5px;color:#8e8e8e;letter-spacing:-0.294px;">017</span>
<span class="t" style="left:47px;top:435.27px;font-size:11.5px;line-height:11.5px;color:#8e8e8e;letter-spacing:-0.294px;">018</span>
<span class="t" style="left:47px;top:644.27px;font-size:11.5px;line-height:11.5px;color:#8e8e8e;letter-spacing:-0.294px;">019</span>
<svg style="left:902px;top:125px" width="11" height="8" viewBox="0 0 11 8"><path d="M2 6.200 L5.500 2.600 L9 6.200" fill="none" stroke="#505050" stroke-width="2"/></svg>
<svg style="left:902px;top:690px" width="11" height="8" viewBox="0 0 11 8"><path d="M2 2.400 L5.500 6 L9 2.400" fill="none" stroke="#505050" stroke-width="2"/></svg>
<div style="left:250px;top:121px;width:3px;height:2px;background:#f03050;"></div>
<div style="left:414px;top:121px;width:2px;height:2px;background:#f03050;"></div>
<svg style="left:0;top:42px" width="1366" height="30" viewBox="0 42 1366 30"><defs><linearGradient id="bx" x1="0" y1="0" x2="0" y2="1"><stop offset="0" stop-color="#b9cbea"/><stop offset="1" stop-color="#5f7fb8"/></linearGradient><radialGradient id="ball" cx="0.38" cy="0.62" r="0.6"><stop offset="0" stop-color="#fff"/><stop offset="0.35" stop-color="#9a9a9a"/><stop offset="1" stop-color="#0a0a0a"/></radialGradient><radialGradient id="xml" cx="0.4" cy="0.35" r="0.7"><stop offset="0" stop-color="#d5e0f2"/><stop offset="1" stop-color="#7f9bc8"/></radialGradient><linearGradient id="bub" x1="0" y1="0" x2="1" y2="1"><stop offset="0" stop-color="#bccae3"/><stop offset="1" stop-color="#768fbd"/></linearGradient></defs><path d="M21 56L28 51M28 51L27.5 62M21 56L27.5 62" stroke="#e02020" stroke-width="1.1" fill="none"/><rect x="25.3" y="49.5" width="5.6" height="3.2" fill="url(#bx)" stroke="#000" stroke-width="1.1"/><rect x="17.3" y="54.4" width="7" height="3.4" fill="url(#bx)" stroke="#000" stroke-width="1.1"/><rect x="23.3" y="60.5" width="8.4" height="3.2" fill="url(#bx)" stroke="#000" stroke-width="1.1"/><path d="M40.7 55.2h7.6l-3.8 4.2z" fill="#111"/><path d="M58.3 62.8 Q61 60 60.6 58.6 Q57.6 57 57.9 54.2 Q58.4 49.6 65 49.4 Q71.8 49.6 72 54.4 Q71.6 59.2 64.4 59.6 Q61.5 61.5 58.3 62.8Z" fill="url(#bub)" stroke="#111" stroke-width="1"/><path d="M83.6 49.5h12.2l1.2 1.2v12.2h-13.4z" fill="#5f7fb8" stroke="#000" stroke-width="1"/><rect x="85.8" y="49.8" width="8.6" height="6" fill="#ecece4" stroke="#222" stroke-width="0.6"/><rect x="85.8" y="58.6" width="8.6" height="4.4" fill="#000"/><rect x="92" y="59.6" width="1.8" height="2.6" fill="#e8e8d8"/><rect x="95.3" y="50" width="1" height="1" fill="#e02020"/><path d="M106.5 47v18.5" stroke="#8b909a" stroke-width="1.2"/><path d="M129.3 51.5v11.4" stroke="#e02020" stroke-width="1.3"/><path d="M128 57h4M129.3 52h2M129.3 62h2" stroke="#e02020" stroke-width="1"/><rect x="122.3" y="55.4" width="5.6" height="3.2" fill="url(#bx)" stroke="#000" stroke-width="1.1"/><rect x="131.6" y="50.4" width="5.2" height="3.1" fill="url(#bx)" stroke="#000" stroke-width="1.1"/><rect x="131.6" y="55.4" width="5.2" height="3.2" fill="url(#bx)" stroke="#000" stroke-width="1.1"/><rect x="131.6" y="60.5" width="5.2" height="3.1" fill="url(#bx)" stroke="#000" stroke-width="1.1"/><path d="M145.7 55.2h7.6l-3.8 4.2z" fill="#111"/><rect x="168.400" y="54.400" width="3.600" height="4.600" fill="#6f8cc0" stroke="#000" stroke-width="1"/><path d="M165.600 50.200Q166.900 48.900 168.200 50.200L168.900 55L168.800 63.100H163.100V60Z" fill="#8fa7d2" stroke="#000" stroke-width="1.300" stroke-linejoin="round"/><path d="M172.200 50.200Q173.500 48.900 174.800 50.200L177.300 60V63.100H171.600L171.500 55Z" fill="#8fa7d2" stroke="#000" stroke-width="1.300" stroke-linejoin="round"/><path d="M163.8 62.6h4M172.4 62.6h4" stroke="#d01818" stroke-width="1.2"/><path d="M185.5 47v18.5" stroke="#8b909a" stroke-width="1.2"/><path d="M201.2 62.6V53.4h4.6l1.2 1.4h7.4v2.6" fill="#fff" stroke="#000" stroke-width="1.1"/><path d="M201.2 62.6L205 57.2h11l-4 5.4z" fill="#2e4a7d" stroke="#000" stroke-width="1"/><path d="M209.4 51.4q3.2-3 5.6 1.2" fill="none" stroke="#e02020" stroke-width="1.2"/><path d="M213.4 52.6l2.6 1.2.4-2.8z" fill="#e02020"/><path d="M224.7 55.2h7.6l-3.8 4.2z" fill="#111"/><path d="M238.4 47v18.5" stroke="#8b909a" stroke-width="1.2"/><rect x="253.200" y="51.400" width="15.600" height="6" fill="#86a0cf"/><path d="M253.200 51.100h15.600M253.200 57.600h15.600" stroke="#000" stroke-width="1.200"/><circle cx="261" cy="57.200" r="3.800" fill="#d5dff0" stroke="#000" stroke-width="1.300"/><path d="M261 54.600v3.400" stroke="#445" stroke-width="0.900"/><path d="M263.600 59.800l1.600 1.500" stroke="#000" stroke-width="2"/><path d="M265 61l3.600 3.200" stroke="#c00000" stroke-width="2.400" stroke-linecap="round"/><path d="M280 50.500h5M286 50.500h6M280 52.700h3M284 52.700h6M291 52.700h1.500M280 54.900h4M280 57.100h2.500M280 59.300h4M291.500 54.900h1.500M280 61.500h3M284 61.500h3M280 63.400h6.500" stroke="#111" stroke-width="1.100"/><circle cx="287.400" cy="57.200" r="3.800" fill="#d5dff0" stroke="#000" stroke-width="1.300"/><path d="M285.400 56.200h4M285.400 58.200h4" stroke="#556" stroke-width="0.800"/><path d="M290 59.800l1.600 1.500" stroke="#000" stroke-width="2"/><path d="M291.400 61l3.600 3.200" stroke="#c00000" stroke-width="2.400" stroke-linecap="round"/><circle cx="313.7" cy="56.4" r="7.4" fill="url(#xml)"/><text x="307.200" y="59.800" font-family="Liberation Sans" font-weight="700" font-size="8.600" textLength="13.400" lengthAdjust="spacingAndGlyphs" fill="#000">XML</text><path d="M329.9 55.2h7.6l-3.8 4.2z" fill="#111"/><path d="M360.2 47.2l3 2.4-3 2.4M364.6 47.2l3 2.4-3 2.4" fill="none" stroke="#5a5aa8" stroke-width="1.2"/><path d="M391.2 62.6L393.2 59.4L404 50.6Q405.6 49.8 406 51.4L395 60.8Z" fill="#8aa3d0" stroke="#222" stroke-width="0.8"/><path d="M398.5 54.8L404.6 50.2L405.8 51.6L400 56.4Z" fill="#e01818"/><path d="M394.8 58L396.4 59.6" stroke="#e01818" stroke-width="1.4"/><path d="M391.2 62.6L393.4 59.6L394.6 60.8Z" fill="#111"/><path d="M414.7 55.2h7.6l-3.8 4.2z" fill="#111"/><path d="M426.5 47v18.5" stroke="#8b909a" stroke-width="1.2"/><text x="436.4" y="62.2" font-family="Liberation Serif" font-weight="700" font-size="15" fill="#2e2e2e">B</text><text x="462.6" y="62" font-family="Liberation Serif" font-weight="700" font-style="italic" font-size="14.5" fill="#3a3a3a">I</text><text x="488.2" y="60.8" font-family="Liberation Sans" font-size="12.5" fill="#444">U</text><path d="M489 62.6h8.6" stroke="#444" stroke-width="1"/><path d="M508.5 47v18.5" stroke="#8b909a" stroke-width="1.2"/><text x="526" y="61.600" font-family="Liberation Serif" font-weight="700" font-style="italic" font-size="14.500" fill="#9a9a9a" stroke="#9a9a9a" stroke-width="0.500">A</text><path d="M523.2 53h4.4" stroke="#111" stroke-width="1.8"/><text x="552.200" y="61.600" font-family="Liberation Serif" font-weight="700" font-style="italic" font-size="14.500" fill="#9a9a9a" stroke="#9a9a9a" stroke-width="0.500">A</text><path d="M549.2 53h5.4M551.9 50.2v5.6" stroke="#111" stroke-width="1.7"/><circle cx="582.4" cy="56.6" r="7.4" fill="url(#ball)" stroke="#111" stroke-width="0.6"/><path d="M602.8 61.4V57.8L610.4 50H618.2V54L611 61.4Z" fill="#a2a2a2"/><path d="M624.6 47v18.5" stroke="#8b909a" stroke-width="1.2"/><path d="M641 51h8.2M641 53.2h10.8M641 55.4h8.2M641 57.6h10.8M641 59.8h8.2M641 62h10.8" stroke="#b2b2b2" stroke-width="1.1"/><path d="M669.8 51h7.4M668.2 53.2h10.6M669.8 55.4h7.4M668.2 57.6h10.6M669.8 59.8h7.4M668.2 62h10.6" stroke="#b2b2b2" stroke-width="1.1"/><path d="M696 51h8.2M693.4 53.2h10.8M696 55.4h8.2M693.4 57.6h10.8M696 59.8h8.2M693.4 62h10.8" stroke="#b2b2b2" stroke-width="1.1"/><path d="M714.6 47v18.5" stroke="#8b909a" stroke-width="1.2"/><path d="M730 50.4h2.8v2.8h-2.8zM730 55.2h2.8v2.8h-2.8zM730 60h2.8v2.8h-2.8z" fill="#a8a8a8"/><path d="M735.6 51.8h7.8M735.6 56.6h7.8M735.6 61.4h7.8" stroke="#b2b2b2" stroke-width="1.1"/><path d="M752.5 47v18.5" stroke="#8b909a" stroke-width="1.2"/><path d="M772.6 49L775.6 58.6M777.2 49L773.6 58.6" stroke="#111" stroke-width="1.5" fill="none"/><circle cx="772.4" cy="61" r="2" fill="none" stroke="#111" stroke-width="1.3"/><circle cx="777" cy="61" r="2" fill="none" stroke="#111" stroke-width="1.3"/><path d="M794.2 50.8h5l2 2v7h-7z" fill="#e8e8e8" stroke="#333" stroke-width="1"/><path d="M795.6 53.4h3.6M795.6 55.4h3.6M795.6 57.4h3.6" stroke="#555" stroke-width=".8"/><path d="M800.2 54.2h5.4l2.2 2.2v6.6h-7.6z" fill="#f4f4f4" stroke="#111" stroke-width="1.1"/><path d="M801.8 57.6h4.2M801.8 59.4h4.2M801.8 61.2h4.2" stroke="#333" stroke-width=".8"/><path d="M820 52h11.4v11h-11.4z" fill="#c9c9c9" stroke="#111" stroke-width="1.2"/><path d="M823 52.4v-1.6h1.6v-1h2.4v1h1.6v1.6z" fill="#888" stroke="#111" stroke-width=".9"/><path d="M825.4 56.6h8.4v6.8h-8.4z" fill="#fff" stroke="#111" stroke-width="1.1"/><path d="M827 59.4h4M827 61.2h5" stroke="#333" stroke-width=".8"/></svg>
<svg style="left:0;top:99px" width="44" height="605" viewBox="0 99 44 605"><path d="M7.4 104v9.4h3.4" fill="none" stroke="#e01020" stroke-width="1.1"/><path d="M9.8 111.4l2.2 2-2.2 2" fill="none" stroke="#e01020" stroke-width="1.1"/><path d="M13 105.5h8M13 107.6h8M13 109.7h4M13 111.6h4M13 115.5h3M13 117.6h8" stroke="#5b7fc0" stroke-width="1.1" stroke-dasharray="2.4 0.8"/><path d="M13 113.5h7" stroke="#111" stroke-width="1.1" stroke-dasharray="2.4 0.8"/><circle cx="11.1" cy="131.3" r="3.9" fill="#e8eef8" stroke="#000" stroke-width="1.3"/><path d="M14.4 134.4l5.4 4.8" stroke="#c00000" stroke-width="2.4" stroke-linecap="round"/><path d="M14 134l1.4 1.3" stroke="#000" stroke-width="1.6"/><path d="M8.4 163.2 Q11 160.6 10.8 159 Q8 157.6 8.2 154.6 Q8.8 150.4 15 150.2 Q21.6 150.4 21.8 154.8 Q21.4 159.2 14.6 159.4 Q11.5 161.8 8.4 163.2Z" fill="url(#bub)" stroke="#111" stroke-width="1"/><path d="M4 171.6h22" stroke="#707a88" stroke-width="1.1"/><text x="6.6" y="199.2" font-family="Liberation Serif" font-weight="700" font-size="14" fill="#000" letter-spacing="-1">“</text><text x="15" y="199.2" font-family="Liberation Serif" font-weight="700" font-size="14" fill="#000" letter-spacing="-1">”</text><text x="6.6" y="220.4" font-family="Liberation Serif" font-weight="700" font-size="14" fill="#000" letter-spacing="-1">“</text><text x="15" y="220.4" font-family="Liberation Serif" font-weight="700" font-size="14" fill="#000" letter-spacing="-1">”</text><path d="M7.6 219.4h14M10 217.2l-2.6 2.2 2.6 2.2M19.2 217.2l2.6 2.2-2.6 2.2" fill="none" stroke="#e01020" stroke-width="1.1"/><path d="M4 229.6h22" stroke="#707a88" stroke-width="1.1"/><path d="M7 243.4h14.4M7 245.4h14.4M7 247.4h14.4M7 249.4h14.4M7 251.4h14.4M7 253.4h14.4M7 255.4h14.4M7 257.4h12" stroke="#111" stroke-width="1.1" stroke-dasharray="3 1.400 2 1.600 3.200 1.200"/><path d="M14.5 245.4L19.8 250.5L14.5 255.8L9.2 250.5Z" fill="#c3d1e2"/><path d="M14.5 246.6L18.4 250.5L14.5 254.4L10.6 250.5Z" fill="url(#dg)" stroke="#111" stroke-width="0.9"/><path d="M7 266.5h14.4M7 268.6h13" stroke="#111" stroke-width="1.1" stroke-dasharray="3.4 0.8"/><path d="M12 270.2h5l-2.5 2.9z" fill="#e01020"/><path d="M14.5 273.59999999999997L18.6 277.7L14.5 281.8L10.4 277.7Z" fill="url(#dg)" stroke="#111" stroke-width="1"/><path d="M11.4 292.3L15.600000000000001 296.5L11.4 300.7L7.2 296.5Z" fill="url(#dg)" stroke="#111" stroke-width="1"/><path d="M17 291.6h4.8M17 293.6h3M17 295.6h4.8M17 297.6h4.8M17 299.6h3.6M17 301.6h4" stroke="#111" stroke-width="1.1" stroke-dasharray="2.4 0.8"/><path d="M11.4 315.40000000000003L15.600000000000001 319.6L11.4 323.8L7.2 319.6Z" fill="url(#dg)" stroke="#111" stroke-width="1"/><path d="M14.200 315.200l4.300 4.400-4.300 4.400M16.600 315.200l4.300 4.400-4.300 4.400M19 315.200l3.300 4.400-3.300 4.400" fill="none" stroke="#e01020" stroke-width="0.9"/><path d="M14.5 335.2L21.8 342.4L14.5 349.6L7.2 342.4Z" fill="none" stroke="#e01020" stroke-width="1.1" stroke-dasharray="1.4 0.7"/><rect x="10.4" y="338.3" width="8.2" height="8.2" fill="#f4f400" stroke="#000" stroke-width="1.3"/><path d="M14.5 337.4L19.6 342.4L14.5 347.4L9.4 342.4Z" fill="#ffffd0" stroke="#222" stroke-width="0.7"/><path d="M12.2 358.8h9.6v12.8h-9.6z" fill="#f4f6fa" stroke="#b0b4bc" stroke-width="0.8"/><path d="M8.3 364.9L12.2 358.7H21.8L19.2 364.9Z" fill="url(#rg)"/><path d="M4 379.6h22" stroke="#707a88" stroke-width="1.1"/><rect x="2.5" y="389.5" width="25" height="21" fill="#b9d5f0" stroke="#9cc6ee"/><rect x="2.5" y="412.5" width="25" height="21" fill="#b9d5f0" stroke="#9cc6ee"/><text x="20" y="399.2" font-family="Liberation Sans" font-size="7.4" text-anchor="end" fill="#222">99</text><text x="20" y="407" font-family="Liberation Sans" font-size="7.4" text-anchor="end" fill="#222">100</text><path d="M21.5 393v15.4" stroke="#d81020" stroke-width="1.2"/><path d="M9.5 416v15" stroke="#d81020" stroke-width="1.2"/><path d="M11.4 417.2h2.4v2.4h-2.4M11.4 427.6h2.4v2.4h-2.4M15.4 416.6h2v11.6h-2M19 417.6h2.6v6h-2.6" fill="none" stroke="#111" stroke-width="1.1"/><path d="M4 437.6h22" stroke="#707a88" stroke-width="1.1"/><path d="M34.2 388.4l4.8 4-4.8 4zM34.2 397.3l4.8 4-4.8 4zM34.2 406.2l4.8 4-4.8 4z" fill="#3c3c3c"/><rect x="7.5" y="451.5" width="9" height="5" fill="url(#bx)" stroke="#000" stroke-width="1.3"/><rect x="12.4" y="460.4" width="9.4" height="5.2" fill="#b3bfce" stroke="#c8d0da" stroke-width="0.8"/><path d="M8 458.4l.6 4h2.6M8.4 459l2.8 3.4" fill="none" stroke="#e01020" stroke-width="1.3"/><rect x="7.4" y="474.4" width="9.4" height="5.2" fill="#b3bfce" stroke="#c8d0da" stroke-width="0.8"/><rect x="12.5" y="483.6" width="9" height="5" fill="url(#bx)" stroke="#000" stroke-width="1.3"/><path d="M8 481.2l.6 4h2.6M8.4 481.8l2.8 3.4" fill="none" stroke="#e01020" stroke-width="1.3"/><text x="6.4" y="511.4" font-family="Liberation Serif" font-weight="700" font-size="13" fill="#000" letter-spacing="-1">“</text><text x="16" y="511.4" font-family="Liberation Serif" font-weight="700" font-size="13" fill="#000" letter-spacing="-1">”</text><path d="M14.3 500.4v8.4M12.8 500.2h3M12.8 509h3" stroke="#e01020" stroke-width="1.2"/><path d="M4 518.4h22" stroke="#707a88" stroke-width="1.1"/><circle cx="11.4" cy="536.5" r="3.9" fill="#eef2f8" stroke="#000" stroke-width="1.2"/><path d="M9.2 536.5h4.4M11.4 534.3v4.4" stroke="#000" stroke-width="1"/><path d="M14.8 539.6l5 4.9" stroke="#c00000" stroke-width="2.3" stroke-linecap="round"/><path d="M14.2 539.2l1.3 1.3" stroke="#000" stroke-width="1.6"/><circle cx="11.4" cy="559.2" r="3.9" fill="#eef2f8" stroke="#000" stroke-width="1.2"/><path d="M9.2 559.2h4.4" stroke="#000" stroke-width="1"/><path d="M14.8 562.4l5 4.9" stroke="#c00000" stroke-width="2.3" stroke-linecap="round"/><path d="M14.2 562l1.3 1.3" stroke="#000" stroke-width="1.6"/></svg>
<svg style="left:0;top:0" width="1366" height="22" viewBox="0 0 1366 22"><defs><radialGradient id="atl" cx="0.35" cy="0.3" r="0.8"><stop offset="0" stop-color="#e85a5a"/><stop offset="0.5" stop-color="#c01820"/><stop offset="1" stop-color="#8a0810"/></radialGradient></defs><circle cx="9.900" cy="10.500" r="5.300" fill="none" stroke="url(#atl)" stroke-width="2.100"/><rect x="13.600" y="12.900" width="3.600" height="1.900" fill="#fff"/><circle cx="10" cy="10.800" r="2.100" fill="#c8141c"/><circle cx="9.500" cy="10.200" r="0.800" fill="#e86a6a"/><path d="M10.700 11.500h1.500v3.600h4v1.700h-7.500q2-0.600 2-2.400z" fill="#a80c14"/><path d="M1245.5 10.5h10" stroke="#000" stroke-width="1"/><path d="M1290.5 7.5h7v7h-7z" fill="none" stroke="#000" stroke-width="1"/><path d="M1292.5 7.5v-2h7v7h-2" fill="none" stroke="#000" stroke-width="1"/><path d="M1336 5l10 10M1346 5l-10 10" stroke="#000" stroke-width="1.1"/></svg>
<div style="left:1346px;top:98px;width:20px;height:46px;border:1px solid #5f6670;border-right:none;border-radius:4px 0 0 4px;background:#c5d3e3"></div>
<svg style="left:1348.6px;top:114.4px" width="16" height="16" viewBox="0 0 18 18"><path d="M6 1.5h4.5v4.5h4.5v4.5h-4.5v4.5h-4.5v-4.5h-4.5v-4.5h4.5z" fill="#fff" stroke="#000" stroke-width="1.5" stroke-linejoin="round"/></svg>
<svg style="left:1220px;top:706px" width="20" height="20" viewBox="0 0 20 20"><circle cx="9.5" cy="9.5" r="7.6" fill="#e8ecf8" stroke="#4a58a8" stroke-width="1"/><path d="M2 9.5h15M9.5 2v15M4 5q5.5 3 11 0M4 14q5.5-3 11 0M9.5 2q-6 7.5 0 15M9.5 2q6 7.5 0 15" fill="none" stroke="#5a68b8" stroke-width="0.8"/><rect x="13" y="13" width="4" height="4" fill="#e02030"/></svg>
<div style="left:441px;top:728px;width:48px;height:40px;background:#3b3b3b;"></div>
<div style="left:200px;top:766px;width:40px;height:2px;background:#f6cfae;"></div>
<div style="left:396px;top:766px;width:32px;height:2px;background:#f6cfae;"></div>
<div style="left:428px;top:766px;width:8px;height:2px;background:#c9a98e;"></div>
<div style="left:441px;top:766px;width:48px;height:2px;background:#f6cfae;"></div>
<div style="left:1361px;top:728px;width:1px;height:40px;background:#4a4a4a;"></div>
<svg style="left:0;top:728px" width="1366" height="40" viewBox="0 728 1366 40"><path d="M15.8 742.1l6.6-.9v6.4h-6.6zM23.4 741l8.8-1.3v7.9h-8.8zM15.8 748.6h6.6v6.4l-6.6-.9zM23.4 748.6h8.8v7.9l-8.8-1.3z" fill="#fff"/><circle cx="74.5" cy="745.5" r="5.4" fill="none" stroke="#fff" stroke-width="1.5"/><path d="M70.6 749.6l-6.4 6.2" stroke="#fff" stroke-width="1.6"/><path d="M112.500 740v2h10.200v-2M112.500 755.200v-2.400h10.200v2.400" fill="none" stroke="#fff" stroke-width="1.200"/><rect x="112.500" y="744.700" width="10.200" height="5.800" fill="none" stroke="#fff" stroke-width="1.200"/><path d="M126.500 740v2.800M126.500 748v7.200" stroke="#fff" stroke-width="1.300"/><rect x="125" y="744.200" width="3.100" height="2.900" fill="#fff"/><path d="M161.6 747.6q.4-9.6 9.8-10.4q9.2 0 9.6 9.4v2.4h-13q.4 5 6 5.2q3.4 0 6-1.6v4.2q-3 1.6-7.2 1.6q-8.2-.6-8.4-8.4q.2-4.6 4.4-6.8q-2.2 2.2-2.6 4.2h7.8q-.2-4.4-4-4.4q-5 .4-8.400 5z" fill="#0f78d4"/><path d="M209.2 739.4h6.4l1.6 1.6h13v15.400h-21z" fill="#f7d674"/><path d="M209.2 743h21v13.400h-21z" fill="#fce595"/><path d="M213.200 756.400v-6.600h12.800v6.600h-3.400v-3.600h-6v3.600z" fill="#3a9fe4"/><rect x="210.200" y="740.200" width="4.400" height="1" fill="#fff" opacity=".7"/><path d="M263.200 741.600q0-5 5.200-5.200q5.200.2 5.200 5.200" fill="none" stroke="#fff" stroke-width="1.300"/><path d="M257 741.500h23.400v15q0 2-2 2h-19.400q-2 0-2-2z" fill="#fff"/><rect x="263" y="745" width="5.200" height="5.200" fill="#f25022"/><rect x="269.200" y="745" width="5.200" height="5.200" fill="#7fba00"/><rect x="263" y="751.200" width="5.200" height="5.200" fill="#00a4ef"/><rect x="269.200" y="751.200" width="5.200" height="5.200" fill="#ffb900"/><path d="M306 743.400l12-5.600l12 5.600v13.600h-24z" fill="#fff"/><path d="M308 744.400h20.400l-9 6l5 4.600l-16.400-9.600z" fill="#0c0c0c"/><circle cx="367.100" cy="748" r="11.200" fill="#fff"/><path d="M367.100 748L357.400 742.400A11.200 11.200 0 0 1 376.800 742.400Z" fill="#db4437"/><path d="M357.400 742.400A11.200 11.200 0 0 1 376.800 742.400L367.100 742.400Z" fill="#db4437"/><path d="M357.400 742.400A11.200 11.200 0 0 0 365.600 759.100L371 748.800L367.100 748Z" fill="#0f9d58"/><path d="M376.800 742.400A11.200 11.200 0 0 1 365.600 759.100L371.400 748L367.100 742.400Z" fill="#ffcd40"/><circle cx="367.100" cy="748" r="5.300" fill="#fff"/><circle cx="367.100" cy="748" r="4.200" fill="#4285f4"/><rect x="414" y="739" width="13" height="17.500" fill="#fff"/><path d="M418.500 741.500h7M418.500 744.300h7M418.500 747.100h7M418.500 749.900h7M418.500 752.700h7" stroke="#2b579a" stroke-width="1.300"/><path d="M405 738.400l13-2.200v23l-13-2.200z" fill="#2b579a"/><path d="M407.400 743.600l1.600 8.200l2.200-7.200l2.200 7.200l1.600-8.200" fill="none" stroke="#fff" stroke-width="1.500"/><circle cx="464.600" cy="747.300" r="7.600" fill="none" stroke="#c4161e" stroke-width="3"/><rect x="469.800" y="750.700" width="5.400" height="2.700" fill="#3b3b3b"/><circle cx="464.800" cy="747.800" r="3" fill="#d81c26"/><circle cx="464" cy="746.900" r="1.100" fill="#f07a7a"/><path d="M465.800 748.800h2.200v5.200h5.800v2.500h-10.800q2.800-.8 2.800-3.500z" fill="#b01018"/><circle cx="1126.200" cy="743.200" r="2.700" fill="none" stroke="#fff" stroke-width="1.200"/><path d="M1122.400 751.600q.4-4.800 4-4.800q3.600 0 4 4.800" fill="none" stroke="#fff" stroke-width="1.200"/><circle cx="1120.200" cy="747.200" r="2.500" fill="none" stroke="#fff" stroke-width="1.200"/><path d="M1116.400 755.200q.4-4.800 3.800-4.800q3.400 0 3.800 4.800" fill="none" stroke="#fff" stroke-width="1.200"/><path d="M1153.400 751l5.800-5.800l5.800 5.800" fill="none" stroke="#fff" stroke-width="1.300"/><rect x="1179.500" y="744.500" width="10" height="7.400" fill="none" stroke="#d0d0d0" stroke-width="1"/><path d="M1190.200 746.600v3.200" stroke="#d0d0d0" stroke-width="1.200"/><path d="M1182.200 746.200l3.800 4M1186 746.200l-3.800 4" stroke="#fff" stroke-width="1"/><path d="M1176.400 743v2.400M1178.800 743v2.400M1175.600 745.400h4v2q-.4 1.600-2 1.600q-1.600 0-2-1.600zM1177.600 749v3.600" fill="none" stroke="#fff" stroke-width="1"/><path d="M1200 746.400h5.200l-2.600-5.600h2.200l4.800 5.600h3.600q2 .2 2 1.400q0 1.200-2 1.400h-3.600l-4.800 5.600h-2.200l2.600-5.600h-3.400l-1.400 2h-1.600l1-3.400l-1-3.400h1.600z" fill="none" stroke="#fff" stroke-width="1.100" stroke-linejoin="round"/><path d="M1223.600 745.400h2.600l3.600-3.400v11.600l-3.600-3.400h-2.600z" fill="none" stroke="#fff" stroke-width="1.100" stroke-linejoin="round"/><path d="M1232 745.600q1.200 2.200 0 4.400M1234.200 743.800q2.200 4 0 8" fill="none" stroke="#fff" stroke-width="1"/><path d="M1236.600 742q3 5.800 0 11.600" fill="none" stroke="#777" stroke-width="1"/><path d="M1325.500 740.500h15.500v12.500h-9l-3 3.200v-3.200h-3.500z" fill="#fff"/><path d="M1328 743.500h10.500M1328 746.300h10.500M1328 749.100h7" stroke="#0c0c0c" stroke-width="1"/><circle cx="1340.500" cy="755.200" r="7.600" fill="#3a3a3a" stroke="#0c0c0c" stroke-width="1.400"/><text x="1340.600" y="759.400" font-family="Liberation Sans" font-size="11.500" text-anchor="middle" fill="#fff">1</text></svg>
<span class="t" style="left:1253px;top:733.14px;font-size:12px;line-height:12px;color:#fff;letter-spacing:-0.431px;">8:31 a. m.</span>
<span class="t" style="left:1250.2px;top:750.64px;font-size:12px;line-height:12px;color:#fff;letter-spacing:-0.385px;">10/03/2019</span>
</div></body></html>
